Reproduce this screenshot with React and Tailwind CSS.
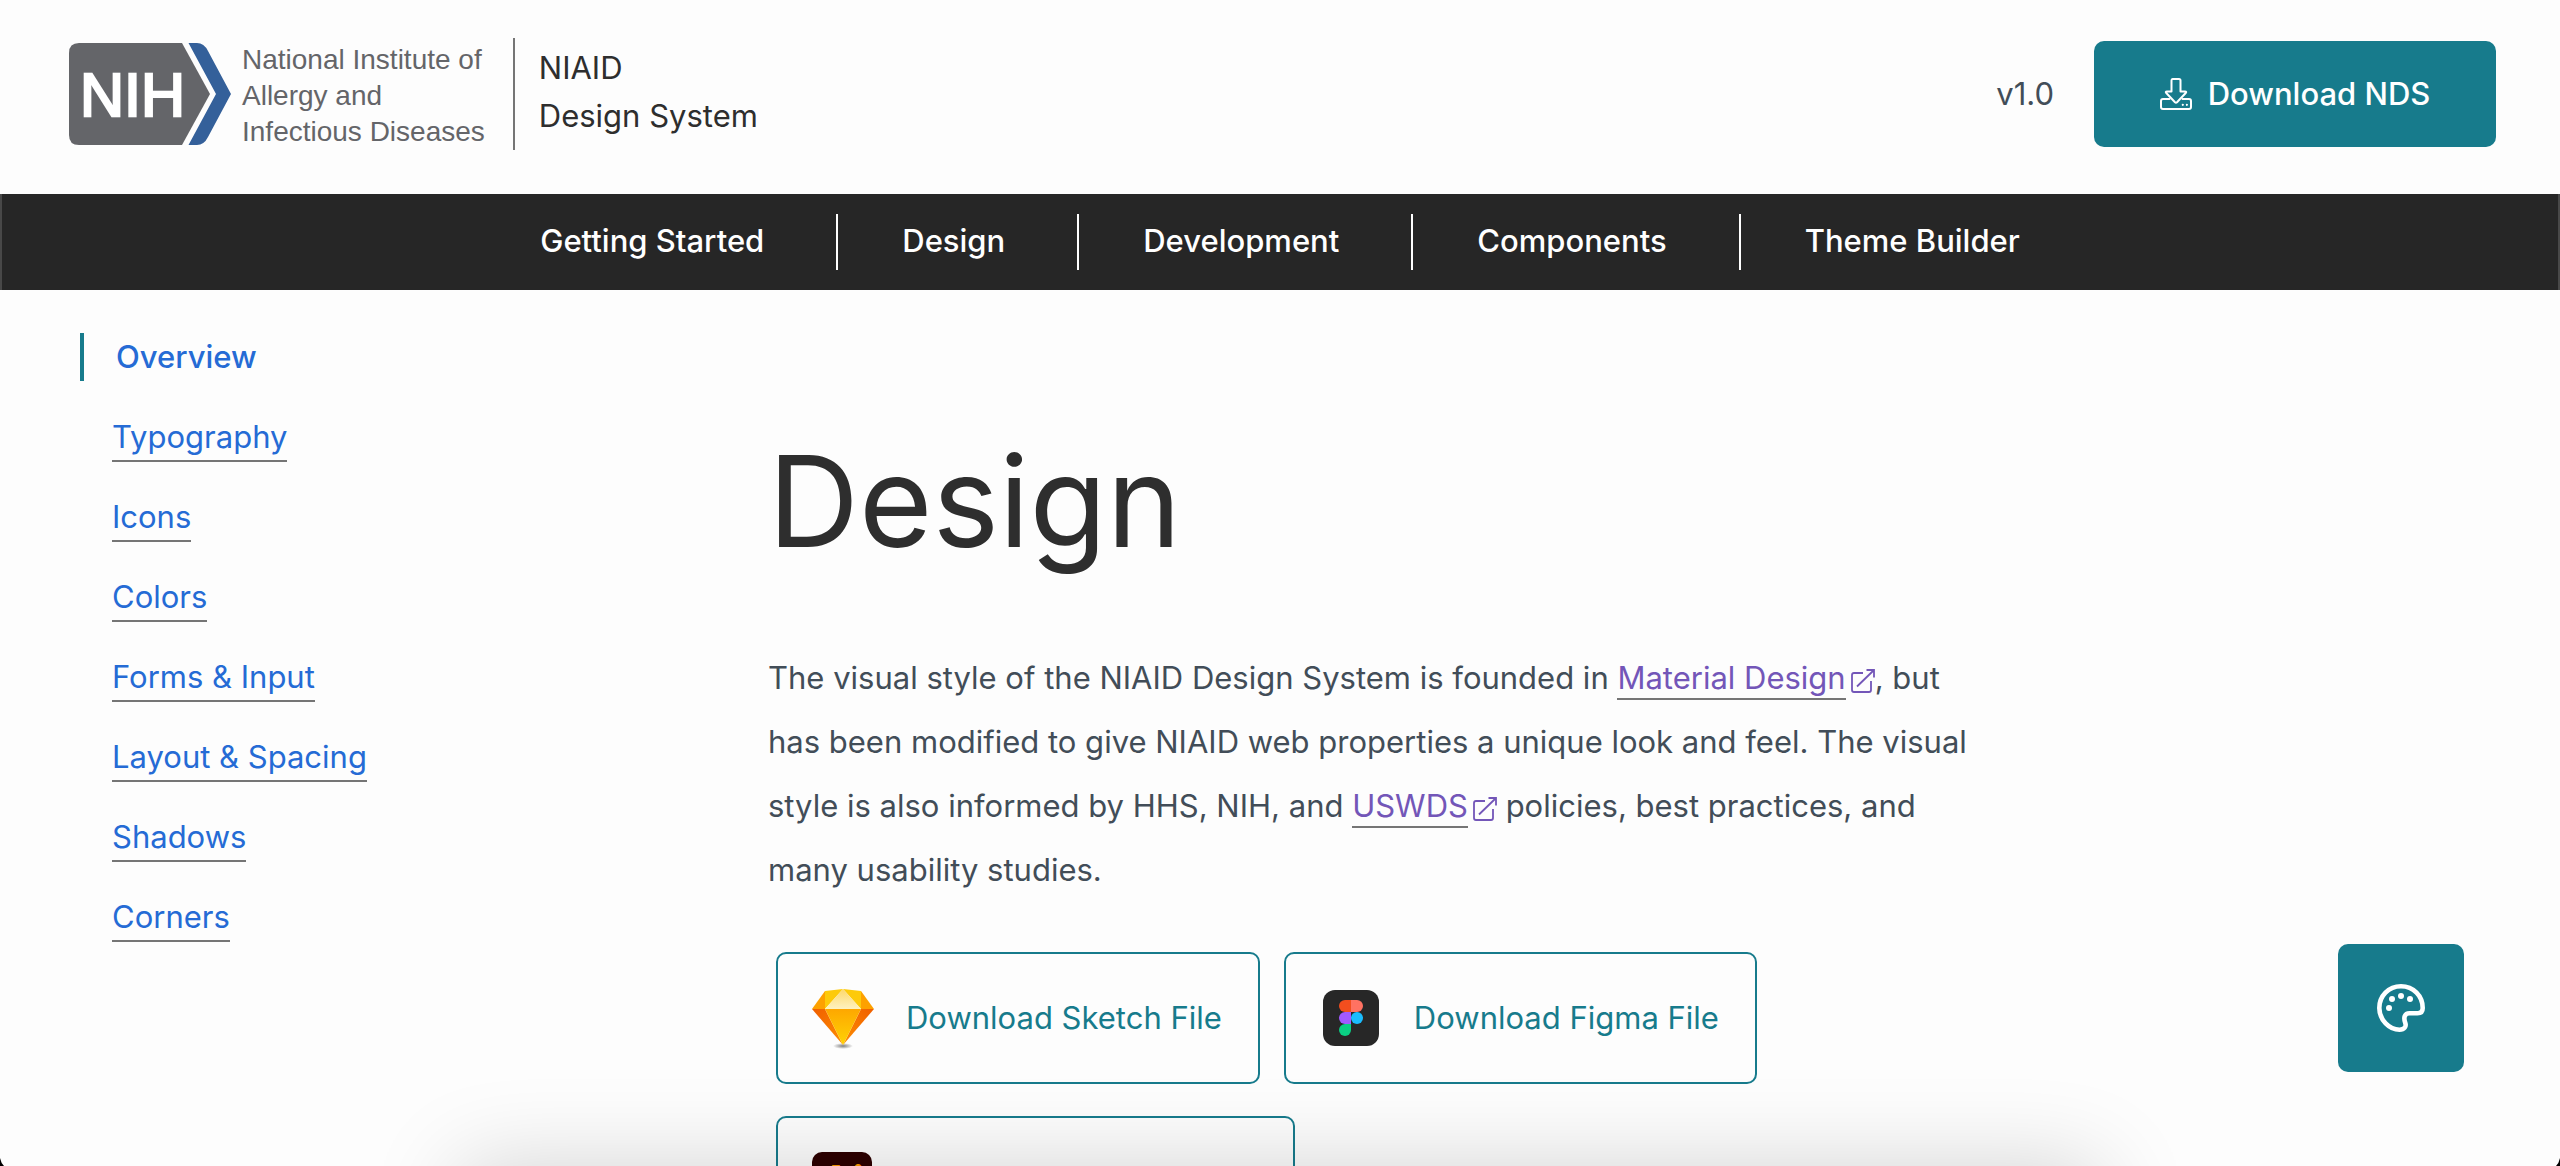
import React from "react";

function NihMark() {
  return (
    <svg viewBox="0 0 162 102" className="h-[102px] w-[162px]" role="img" aria-label="NIH">
      <path d="M10 0H113L141 51L113 102H10Q0 102 0 92V10Q0 0 10 0Z" fill="#646569" />
      <path d="M119.500 0H128Q135 0 139 8L162 51L139 94Q135 102 128 102H119.500L147 51Z" fill="#34609a" />
      <text x="11" y="73" fill="#fff" stroke="#fff" strokeWidth="2.500" className="font-['Liberation_Sans',sans-serif] text-[61px]">NIH</text>
    </svg>
  );
}

function DownloadIcon() {
  return (
    <svg viewBox="0 0 32 32" className="h-8 w-8" fill="none" stroke="#fff" strokeWidth="2" strokeLinejoin="round" strokeLinecap="round" aria-hidden="true">
      <path d="M12.500 1H19Q20.500 1 20.500 2.500V13.500H25Q27 13.500 25.700 15L17 24.300Q16 25.300 15 24.300L6.300 15Q5 13.500 7 13.500H11.500V2.500Q11.500 1 12.500 1Z" />
      <path d="M9.500 21H3Q1 21 1 23V29Q1 31 3 31H29Q31 31 31 29V23Q31 21 29 21H22.500" />
      <path d="M22 26H23.500V27.500H22ZM26 26H27.500V27.500H26Z" fill="#fff" stroke="none" />
      <path d="M22.700 26.700V26.800M26.800 26.700V26.800" />
    </svg>
  );
}

function ExternalIcon() {
  return (
    <svg viewBox="0 0 24 24" className="ml-[5px] inline-block h-6 w-6 align-[-4px]" fill="none" stroke="#7356b8" strokeWidth="1.800" aria-hidden="true">
      <path d="M12 4H3Q1 4 1 6V21Q1 23 3 23H18Q20 23 20 21V12" />
      <path d="M6 17.500L22.500 1.500M15.500 1H23V8.500" />
    </svg>
  );
}

function SketchIcon() {
  return (
    <svg viewBox="0 0 62 62" className="h-[62px] w-[62px]" aria-hidden="true">
      <defs>
        <radialGradient id="sk-shadow"><stop offset="0" stopColor="#555" stopOpacity=".75" /><stop offset="1" stopColor="#555" stopOpacity="0" /></radialGradient>
        <linearGradient id="sk-body" x1="0" y1="0" x2="0" y2="1"><stop offset="0" stopColor="#fea700" /><stop offset="1" stopColor="#fed305" /></linearGradient>
        <linearGradient id="sk-left" x1="0" y1="0" x2="1" y2="1"><stop offset="0" stopColor="#f05e00" /><stop offset="1" stopColor="#fe8f00" /></linearGradient>
        <linearGradient id="sk-right" x1="1" y1="0" x2="0" y2="1"><stop offset="0" stopColor="#f05e00" /><stop offset="1" stopColor="#fe8f00" /></linearGradient>
        <linearGradient id="sk-top" x1="0" y1="0" x2="0" y2="1"><stop offset="0" stopColor="#fdd86a" /><stop offset="1" stopColor="#fef2c0" /></linearGradient>
      </defs>
      <ellipse cx="31" cy="59" rx="10" ry="3" fill="url(#sk-shadow)" />
      <path d="M0 22L13 4L13 22Z" fill="#fda100" />
      <path d="M62 22L49 4L49 22Z" fill="#fda100" />
      <path d="M13 4L31 2L13 22ZM49 4L31 2L49 22Z" fill="#fdca0a" />
      <path d="M31 2L49 22H13Z" fill="url(#sk-top)" />
      <path d="M0 22H13L31 58Z" fill="url(#sk-left)" />
      <path d="M62 22H49L31 58Z" fill="url(#sk-right)" />
      <path d="M13 22H49L31 58Z" fill="url(#sk-body)" />
    </svg>
  );
}

function FigmaIcon() {
  return (
    <svg viewBox="0 0 56 56" className="mx-[3px] h-14 w-14" aria-hidden="true">
      <rect width="56" height="56" rx="12" fill="#272727" />
      <path d="M28 10H22A6 6 0 0 0 22 22H28Z" fill="#f24e1e" />
      <path d="M28 10H34A6 6 0 0 1 34 22H28Z" fill="#ff7262" />
      <path d="M28 22H22A6 6 0 0 0 22 34H28Z" fill="#a259ff" />
      <circle cx="34" cy="28" r="6" fill="#1abcfe" />
      <path d="M28 34H22A6 6 0 1 0 28 40Z" fill="#0acf83" />
    </svg>
  );
}

function IllustratorIcon() {
  return (
    <svg viewBox="0 0 60 60" className="h-[60px] w-[60px]" aria-hidden="true">
      <rect width="60" height="60" rx="10" fill="#2d0000" />
      <text x="8" y="45" fill="#ff9a00" className="text-[44px] font-semibold">Ai</text>
    </svg>
  );
}

function PaletteIcon() {
  return (
    <svg viewBox="0 0 48 48" className="h-12 w-12" fill="none" stroke="#fff" strokeWidth="4.600" aria-hidden="true">
      <path d="M24 2.300C11.500 2.300 2.300 12 2.300 24C2.300 36 12.500 45.700 22.500 45.700C27.500 45.700 29.500 42.500 28.300 39C26.300 33.500 27.500 29.300 32.500 29.300H40.500C43.800 29.300 45.700 27.500 45.700 24C45.700 12 36.500 2.300 24 2.300Z" />
      <g fill="#fff" stroke="none">
        <circle cx="12" cy="24" r="3" /><circle cx="15" cy="15" r="3" /><circle cx="24" cy="12" r="3" /><circle cx="33" cy="15" r="3" />
      </g>
    </svg>
  );
}

const navItems = ["Getting Started", "Design", "Development", "Components", "Theme Builder"];
const sideItems = ["Typography", "Icons", "Colors", "Forms & Input", "Layout & Spacing", "Shadows", "Corners"];

function TextLink({ children }) {
  return (
    <a href="#external" className="whitespace-nowrap text-[#7356b8]">
      <span className="border-b-2 border-[#757575] pb-0.5">{children}</span>
      <ExternalIcon />
    </a>
  );
}

function FileButton({ icon, children }) {
  return (
    <button className="flex h-[132px] items-center gap-8 rounded-[10px] border-2 border-[#177b8c] pr-9 pl-[34px] text-[#177b8c]">
      {icon}
      <span>{children}</span>
    </button>
  );
}

export default function App() {
  return (
    <div className="relative h-screen overflow-hidden bg-[#fdfdfd] font-['Inter',sans-serif] text-[31px] text-[#424d58]">
      <header className="flex h-[194px] items-center pr-16 pb-1.5 pl-[69px]">
        <a href="#home" className="flex items-center text-[#646569]">
          <NihMark />
          <span className="ml-[11px] pt-1 font-['Liberation_Sans',sans-serif] text-[28px] leading-9 whitespace-nowrap">
            National Institute of<br />Allergy and<br />Infectious Diseases
          </span>
        </a>
        <a href="#home" className="ml-7 flex h-28 items-center border-l-2 border-[#757575] pb-1 pl-6 leading-[48px] whitespace-nowrap text-[#2e2e2e]">
          <span>NIAID<br />Design System</span>
        </a>
        <span className="mr-10 ml-auto">v1.0</span>
        <button className="flex h-[106px] w-[402px] items-center justify-center gap-4 rounded-[10px] bg-[#177b8c] font-medium text-white">
          <DownloadIcon />
          Download NDS
        </button>
      </header>

      <nav className="flex h-24 items-center justify-center border-x-2 border-[#484848] bg-[#262626] font-medium text-white">
        {navItems.map((item) => (
          <a
            key={item}
            href="#nav"
            className="flex h-14 items-center border-l-2 border-white pr-[72px] pb-0.5 pl-16 whitespace-nowrap first:border-l-0 first:pl-0 last:pr-0"
          >
            {item}
          </a>
        ))}
      </nav>

      <div className="flex">
        <aside className="w-[768px] shrink-0 pt-[43px] pl-20">
          <ul className="flex flex-col items-start gap-8 leading-[48px] text-[#256bd5]">
            <li className="border-l-4 border-[#177b8c] pl-8 font-medium"><a href="#overview">Overview</a></li>
            {sideItems.map((item) => (
              <li key={item} className="pl-8">
                <a href="#section" className="border-b-2 border-[#757575] pb-[5px]">{item}</a>
              </li>
            ))}
          </ul>
        </aside>

        <main className="w-[1240px]">
          <h1 className="mt-[131px] text-[126px] leading-[160px] text-[#2e2e2e]">Design</h1>
          <p className="mt-[65px] leading-[64px]">
            The visual style of the NIAID Design System is founded in <TextLink>Material Design</TextLink>, but<br />
            has been modified to give NIAID web properties a unique look and feel. The visual<br />
            style is also informed by HHS, NIH, and <TextLink>USWDS</TextLink> policies, best practices, and<br />
            many usability studies.
          </p>
          <div className="mt-[50px] flex max-w-[1100px] flex-wrap gap-x-6 gap-y-8 pl-2">
            <FileButton icon={<SketchIcon />}>Download Sketch File</FileButton>
            <FileButton icon={<FigmaIcon />}>Download Figma File</FileButton>
            <FileButton icon={<IllustratorIcon />}>Download Illustrator File</FileButton>
          </div>
        </main>
      </div>

      <button aria-label="Theme" className="absolute right-24 bottom-[94px] flex h-32 w-[126px] items-center justify-center rounded-[10px] bg-[#177b8c]">
        <PaletteIcon />
      </button>

      <div className="pointer-events-none absolute top-full right-[460px] left-[460px] h-40 shadow-[0_0_90px_rgba(0,0,0,0.17)]" />
      <svg viewBox="0 0 4 8" className="absolute bottom-0 left-0 h-2 w-1" aria-hidden="true"><path d="M0 0Q1 5 4 8H0Z" /></svg>
      <svg viewBox="0 0 4 8" className="absolute right-0 bottom-0 h-2 w-1" aria-hidden="true"><path d="M4 0Q3 5 0 8H4Z" /></svg>
    </div>
  );
}
